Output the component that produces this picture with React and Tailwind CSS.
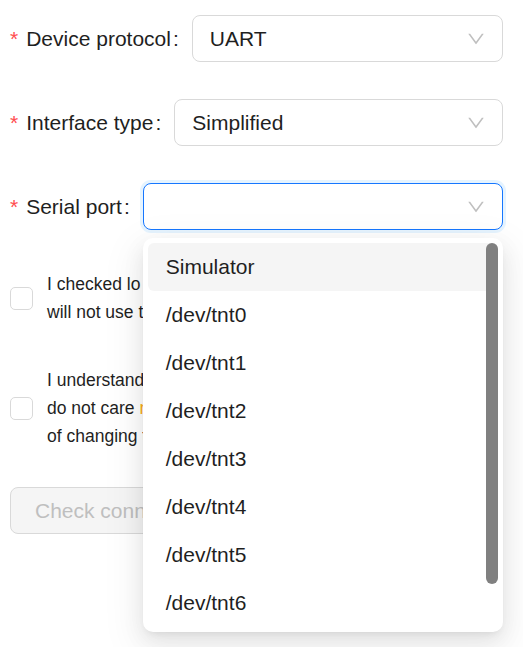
import React from "react";

const Chevron = () => (
  <svg width="18" height="18" viewBox="64 64 896 896" fill="#bfbfbf" aria-hidden="true">
    <path d="M884 256h-75c-5.1 0-9.9 2.5-12.9 6.6L512 654.2 227.9 262.6c-3-4.1-7.8-6.6-12.9-6.6h-75c-6.5 0-10.3 7.4-6.5 12.1l352.6 486.1c12.8 17.6 39 17.6 51.7 0l352.6-486.1c3.9-4.7.1-12.1-6.4-12.1z" />
  </svg>
);

const Label = ({ text }) => (
  <div className="flex items-center shrink-0 text-[21px] text-[#1f1f1f] whitespace-nowrap">
    <span className="text-[#ff4d4f] mr-[8px]">*</span>
    <span>{text}</span>
    <span className="ml-[2px] mr-[13px]">:</span>
  </div>
);

const Select = ({ value, focused }) => (
  <div
    className={
      focused
        ? "flex-1 h-[47px] flex items-center justify-between pl-[17px] pr-[17px] rounded-[8px] border border-[#1677ff] shadow-[0_0_0_3px_rgba(5,145,255,0.1)] bg-white"
        : "flex-1 h-[47px] flex items-center justify-between pl-[17px] pr-[17px] rounded-[8px] border border-[#d9d9d9] bg-white"
    }
  >
    <span className="text-[21px] text-[#1f1f1f]">{value}</span>
    <Chevron />
  </div>
);

const Checkbox = () => (
  <div className="w-[23px] h-[23px] shrink-0 rounded-[5px] border border-[#d9d9d9] bg-white" />
);

const options = [
  "Simulator",
  "/dev/tnt0",
  "/dev/tnt1",
  "/dev/tnt2",
  "/dev/tnt3",
  "/dev/tnt4",
  "/dev/tnt5",
  "/dev/tnt6",
];

export default function App() {
  return (
    <div className="relative w-[523px] h-[647px] overflow-hidden bg-white pl-[10px] pr-[20px] pt-[15px] font-['Liberation_Sans',Arial,sans-serif]">
      <div className="flex items-center h-[47px] mb-[37px]">
        <Label text="Device protocol" />
        <Select value="UART" />
      </div>
      <div className="flex items-center h-[47px] mb-[37px]">
        <Label text="Interface type" />
        <Select value="Simplified" />
      </div>
      <div className="flex items-center h-[47px] mb-[40px] relative z-10">
        <Label text="Serial port" />
        <div className="relative flex-1 flex">
          <Select value="" focused />
          <div className="absolute left-0 right-0 top-[55px] bg-white rounded-[10px] p-[5px] shadow-[0_8px_21px_0_rgba(0,0,0,0.08),0_4px_8px_-5px_rgba(0,0,0,0.12),0_12px_37px_10px_rgba(0,0,0,0.05)]">
            <div className="relative flex flex-col">
              {options.map((o, i) => (
                <div
                  key={o}
                  className={
                    i === 0
                      ? "h-[48px] flex items-center px-[18px] rounded-[6px] bg-[#f5f5f5] text-[21px] text-[#1f1f1f]"
                      : "h-[48px] flex items-center px-[18px] rounded-[6px] text-[21px] text-[#1f1f1f]"
                  }
                >
                  {o}
                </div>
              ))}
              <div className="absolute right-0 top-0 w-[12px] h-[341px] rounded-full bg-[#808080]" />
            </div>
          </div>
        </div>
      </div>

      <div className="flex items-center gap-[14px] mb-[40px]">
        <Checkbox />
        <div className="text-[17.5px] leading-[28px] text-[#1f1f1f]">
          <div className="whitespace-nowrap">I checked lo ports and made sure other apps</div>
          <div className="whitespace-nowrap">will not use this serial port during the check.</div>
        </div>
      </div>

      <div className="flex items-center gap-[14px] mb-[37px]">
        <Checkbox />
        <div className="text-[17.5px] leading-[28px] text-[#1f1f1f]">
          <div className="whitespace-nowrap">I understand the risks of this operation and</div>
          <div className="whitespace-nowrap">
            do not care <span className="text-[#faad14]">much about data loss</span> as a result
          </div>
          <div className="whitespace-nowrap">of changing the device settings.</div>
        </div>
      </div>

      <div className="flex">
        <button
          disabled
          className="h-[47px] px-[24px] rounded-[8px] border border-[#d9d9d9] bg-[#f5f5f5] text-[21px] text-[#bfbfbf]"
        >
          Check connection
        </button>
      </div>
    </div>
  );
}
